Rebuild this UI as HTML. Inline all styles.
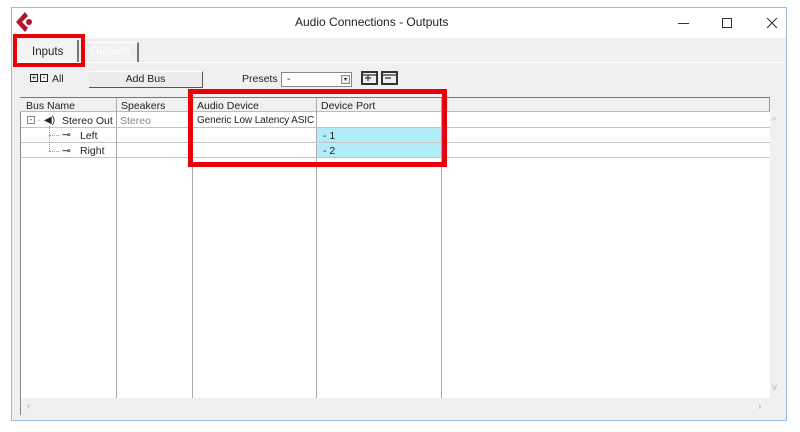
<!DOCTYPE html>
<html><head><style>
*{margin:0;padding:0;box-sizing:border-box}
body{width:800px;height:432px;background:#fff;position:relative;overflow:hidden;font-family:"Liberation Sans",sans-serif;font-size:10.5px;color:#222}
.a{position:absolute}
.win{left:11px;top:7px;width:776px;height:414px;border:1px solid #9dbbe0;background:#f0f0f0}
.t{white-space:nowrap}
</style></head><body>
<div class="a win"></div>
<div class="a" style="left:12px;top:8px;width:774px;height:30px;background:#fff"></div>
<svg class="a" style="left:14px;top:11px" width="22" height="22" viewBox="0 0 22 22"><path d="M11 1 L2 11 L11 21 L14 17 L8 11 L14 5 Z" fill="#b0152c"/><circle cx="15" cy="11" r="3" fill="#b0152c"/></svg>
<div class="a t" style="left:295px;top:15px;font-size:12px;color:#222">Audio Connections - Outputs</div>
<div class="a" style="left:678px;top:23px;width:11px;height:1px;background:#333"></div>
<div class="a" style="left:722px;top:18px;width:10px;height:10px;border:1px solid #333"></div>
<svg class="a" style="left:766px;top:17px" width="12" height="12"><path d="M1 1L11 11M11 1L1 11" stroke="#333" stroke-width="1.1"/></svg>
<!-- tabs -->
<div class="a" style="left:17px;top:40px;width:62px;height:23px;background:#f3f3f3;border-right:2px solid #777"></div>
<div class="a t" style="left:32px;top:46px;font-size:11.5px">Inputs</div>
<div class="a" style="left:84px;top:42px;width:55px;height:21px;background:#f0f0f0;border-right:2px solid #777;border-top:1px solid #fff"></div>
<div class="a t" style="left:90px;top:46px;font-size:11.5px;color:#fff">Outputs</div>
<div class="a" style="left:12px;top:62px;width:774px;height:1px;background:#fff"></div>
<!-- toolbar -->
<div class="a" style="left:30px;top:74px;width:8px;height:8px;border:1px solid #222;font-size:8px;line-height:6px;text-align:center">+</div>
<div class="a" style="left:40px;top:74px;width:8px;height:8px;border:1px solid #222;font-size:8px;line-height:6px;text-align:center">-</div>
<div class="a t" style="left:52px;top:73px">All</div>
<div class="a" style="left:89px;top:71px;width:114px;height:17px;background:#ececec;border-right:1px solid #555;border-bottom:1px solid #555;border-top:1px solid #fff;text-align:center;line-height:15px">Add Bus</div>
<div class="a t" style="left:242px;top:73px">Presets</div>
<div class="a" style="left:281px;top:72px;width:71px;height:15px;background:#fff;border:1px solid #888;padding-left:5px;line-height:13px">-</div>
<div class="a" style="left:341px;top:75px;width:9px;height:9px;border:1px solid #888;background:#eee;font-size:6px;text-align:center;line-height:8px">▾</div>
<svg class="a" style="left:361px;top:71px" width="38" height="14"><rect x="1" y="1" width="15" height="12" fill="#eee" stroke="#333" stroke-width="2"/><path d="M4 7H10M7 4V10M1 4H16" stroke="#333" stroke-width="1.2"/><rect x="21" y="1" width="15" height="12" fill="#eee" stroke="#333" stroke-width="2"/><path d="M24 7H30M21 4H36" stroke="#333" stroke-width="1.2"/></svg>
<!-- table -->
<div class="a" style="left:20px;top:97px;width:750px;height:301px;background:#fff;border-left:1px solid #888"></div>
<div class="a" style="left:20px;top:97px;width:750px;height:15px;background:#f0f0f0;border-top:1px solid #777;border-right:1px solid #999;border-bottom:1px solid #bbb"></div>
<div class="a" style="left:770px;top:97px;width:16px;height:301px;background:#f0f0f0"></div>
<div class="a t" style="left:772px;top:116px;color:#bbb;font-size:10px">^</div>
<div class="a t" style="left:772px;top:382px;color:#bbb;font-size:10px">v</div>
<div class="a" style="left:20px;top:398px;width:750px;height:17px;background:#f0f0f0;border-left:1px solid #888"></div>
<div class="a t" style="left:27px;top:400px;color:#aaa">‹</div>
<div class="a t" style="left:758px;top:400px;color:#aaa">›</div>
<!-- columns -->
<div class="a" style="left:116px;top:98px;width:1px;height:300px;background:#aaa"></div>
<div class="a" style="left:192px;top:98px;width:1px;height:300px;background:#aaa"></div>
<div class="a" style="left:316px;top:98px;width:1px;height:300px;background:#aaa"></div>
<div class="a" style="left:441px;top:98px;width:1px;height:300px;background:#aaa"></div>
<!-- rows -->
<div class="a" style="left:317px;top:128px;width:124px;height:30px;background:#b2ecf8"></div>
<div class="a" style="left:21px;top:127px;width:749px;height:1px;background:#c4c4c4"></div>
<div class="a" style="left:21px;top:142px;width:749px;height:1px;background:#c4c4c4"></div>
<div class="a" style="left:21px;top:157px;width:749px;height:1px;background:#c4c4c4"></div>
<div class="a t" style="left:26px;top:100px">Bus Name</div>
<div class="a t" style="left:121px;top:100px">Speakers</div>
<div class="a t" style="left:197px;top:100px">Audio Device</div>
<div class="a t" style="left:321px;top:100px">Device Port</div>
<div class="a" style="left:27px;top:116px;width:8px;height:8px;border:1px solid #888;font-size:8px;line-height:5px;text-align:center">-</div>
<div class="a t" style="left:37px;top:114px;color:#999">·</div>
<div class="a t" style="left:44px;top:115px;font-size:10px">◀)</div>
<div class="a t" style="left:62px;top:115px">Stereo Out</div>
<div class="a t" style="left:120px;top:115px;color:#888">Stereo</div>
<div class="a t" style="left:197px;top:115px;font-size:10px;letter-spacing:-0.1px">Generic Low Latency ASIC</div>
<div class="a" style="left:49px;top:126px;width:1px;height:25px;border-left:1px dotted #999"></div>
<div class="a" style="left:49px;top:135px;width:10px;border-top:1px dotted #999"></div>
<div class="a" style="left:49px;top:151px;width:10px;border-top:1px dotted #999"></div>
<div class="a t" style="left:62px;top:129px">⊸</div>
<div class="a t" style="left:62px;top:145px">⊸</div>
<div class="a t" style="left:80px;top:130px">Left</div>
<div class="a t" style="left:80px;top:145px">Right</div>
<div class="a t" style="left:323px;top:130px">- 1</div>
<div class="a t" style="left:323px;top:145px">- 2</div>
<!-- red boxes -->
<div class="a" style="left:13px;top:34px;width:72px;height:33px;border:4px solid #e8000b"></div>
<div class="a" style="left:188px;top:89px;width:259px;height:78px;border:5px solid #e8000b"></div>
</body></html>
